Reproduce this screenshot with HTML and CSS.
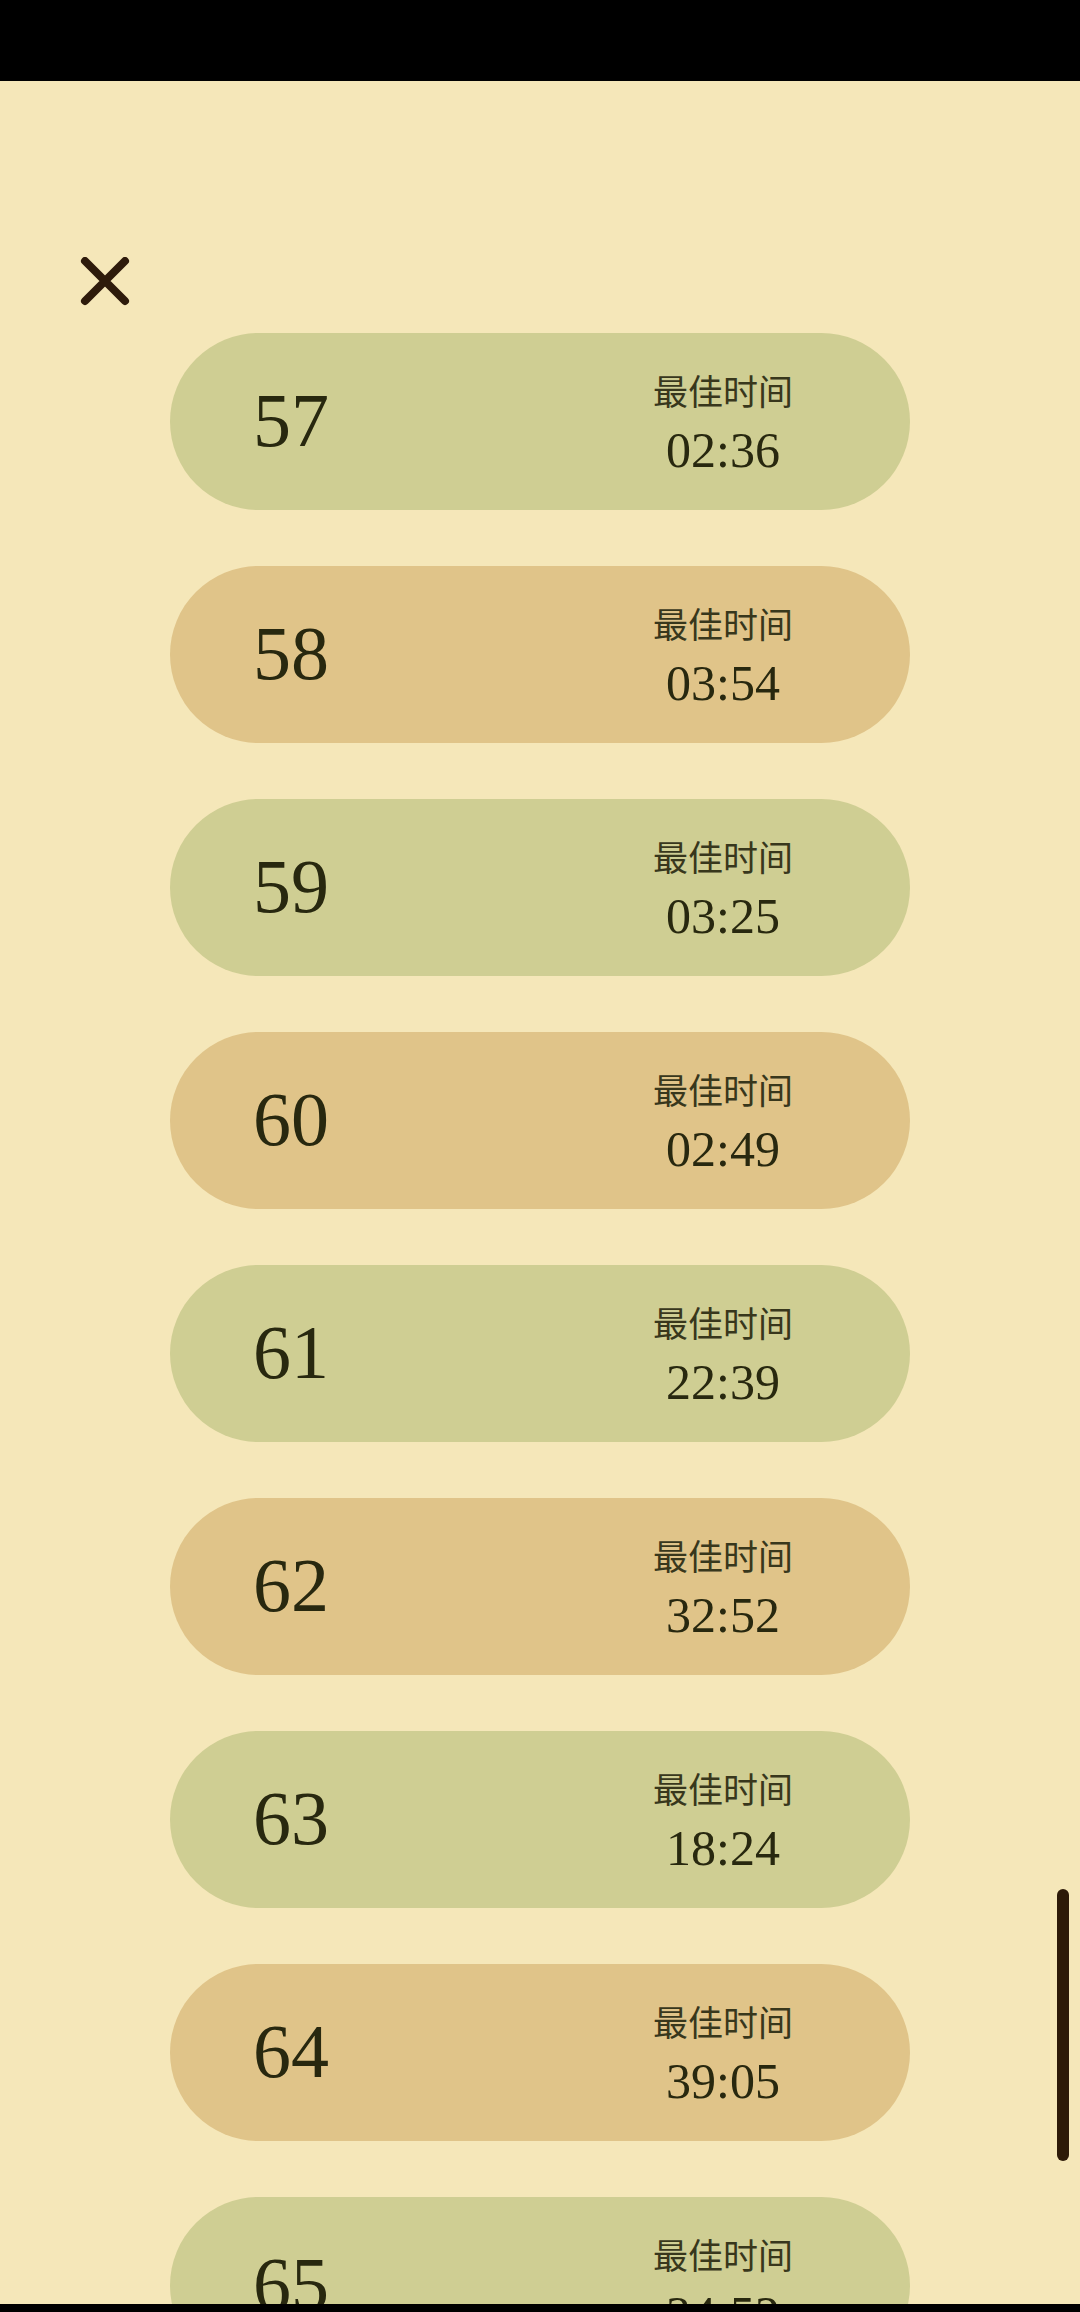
FILE: index.html
```html
<!DOCTYPE html>
<html lang="zh-CN">
<head>
  <meta charset="UTF-8" />
  <meta name="viewport" content="width=device-width, initial-scale=1.0" />
  <link rel="stylesheet" href="styles.css">
  <title>Levels</title>
</head>
<body>
<div class="status-bar"></div>

<main class="screen">
  <button class="close-btn" aria-label="close">
    <svg viewBox="0 0 50 50" width="50" height="50">
      <path d="M5 4 L45 44 M45 4 L5 44" stroke="#2e1b0b" stroke-width="8" stroke-linecap="round" fill="none"/>
    </svg>
  </button>

  <ul class="levels">
    <li class="level green">
      <span class="level-num">57</span>
      <div class="best">
        <span class="best-label">最佳时间</span>
        <span class="best-time">02:36</span>
      </div>
    </li>
    <li class="level tan">
      <span class="level-num">58</span>
      <div class="best">
        <span class="best-label">最佳时间</span>
        <span class="best-time">03:54</span>
      </div>
    </li>
    <li class="level green">
      <span class="level-num">59</span>
      <div class="best">
        <span class="best-label">最佳时间</span>
        <span class="best-time">03:25</span>
      </div>
    </li>
    <li class="level tan">
      <span class="level-num">60</span>
      <div class="best">
        <span class="best-label">最佳时间</span>
        <span class="best-time">02:49</span>
      </div>
    </li>
    <li class="level green">
      <span class="level-num">61</span>
      <div class="best">
        <span class="best-label">最佳时间</span>
        <span class="best-time">22:39</span>
      </div>
    </li>
    <li class="level tan">
      <span class="level-num">62</span>
      <div class="best">
        <span class="best-label">最佳时间</span>
        <span class="best-time">32:52</span>
      </div>
    </li>
    <li class="level green">
      <span class="level-num">63</span>
      <div class="best">
        <span class="best-label">最佳时间</span>
        <span class="best-time">18:24</span>
      </div>
    </li>
    <li class="level tan">
      <span class="level-num">64</span>
      <div class="best">
        <span class="best-label">最佳时间</span>
        <span class="best-time">39:05</span>
      </div>
    </li>
    <li class="level green">
      <span class="level-num">65</span>
      <div class="best">
        <span class="best-label">最佳时间</span>
        <span class="best-time">34:52</span>
      </div>
    </li>
  </ul>

  <div class="scroll-thumb"></div>
</main>

<div class="nav-bar"></div>
</body>
</html>
```

FILE: styles.css
```css
/* Page */
body {
  margin: 0;
  padding: 0;
  width: 1080px;
  height: 2312px;
  overflow: hidden;
  background: #f5e7b9;
  font-family: 'Liberation Serif', serif;
  color: #28280f;
  position: relative;
}

.status-bar {
  height: 81px;
  background: #000;
}

.screen {
  position: relative;
  height: 2231px;
  overflow: hidden;
}

/* Close button */
.close-btn {
  display: block;
  margin: 176px 0 0 80px;
  padding: 0;
  width: 50px;
  height: 50px;
  border: none;
  background: none;
  cursor: pointer;
}

.close-btn svg {
  display: block;
}

/* Level list */
.levels {
  list-style: none;
  margin: 26px 0 0 170px;
  padding: 0;
  width: 740px;
  display: flex;
  flex-direction: column;
  gap: 56px;
}

.level {
  height: 177px;
  flex-shrink: 0;
  border-radius: 89px;
  display: flex;
  align-items: center;
  justify-content: space-between;
  padding: 0 87px 0 83px;
  box-sizing: border-box;
}

.level.green {
  background: #cfce93;
}

.level.tan {
  background: #e0c489;
}

.level-num {
  font-size: 76px;
  line-height: 1;
  padding-bottom: 4px;
}

.best {
  width: 200px;
  padding-top: 4px;
  display: flex;
  flex-direction: column;
  align-items: center;
}

.best-label {
  font-family: 'Noto Sans CJK SC', sans-serif;
  font-size: 35px;
  line-height: 40px;
  color: #38371c;
}

.best-time {
  font-size: 50px;
  line-height: 56px;
  margin-top: 12px;
}

/* Scroll indicator */
.scroll-thumb {
  position: absolute;
  right: 11px;
  top: 1808px;
  width: 12px;
  height: 272px;
  border-radius: 6px;
  background: #2d1a08;
}

.nav-bar {
  position: absolute;
  left: 0;
  right: 0;
  bottom: 0;
  height: 8px;
  background: #000;
}
```
